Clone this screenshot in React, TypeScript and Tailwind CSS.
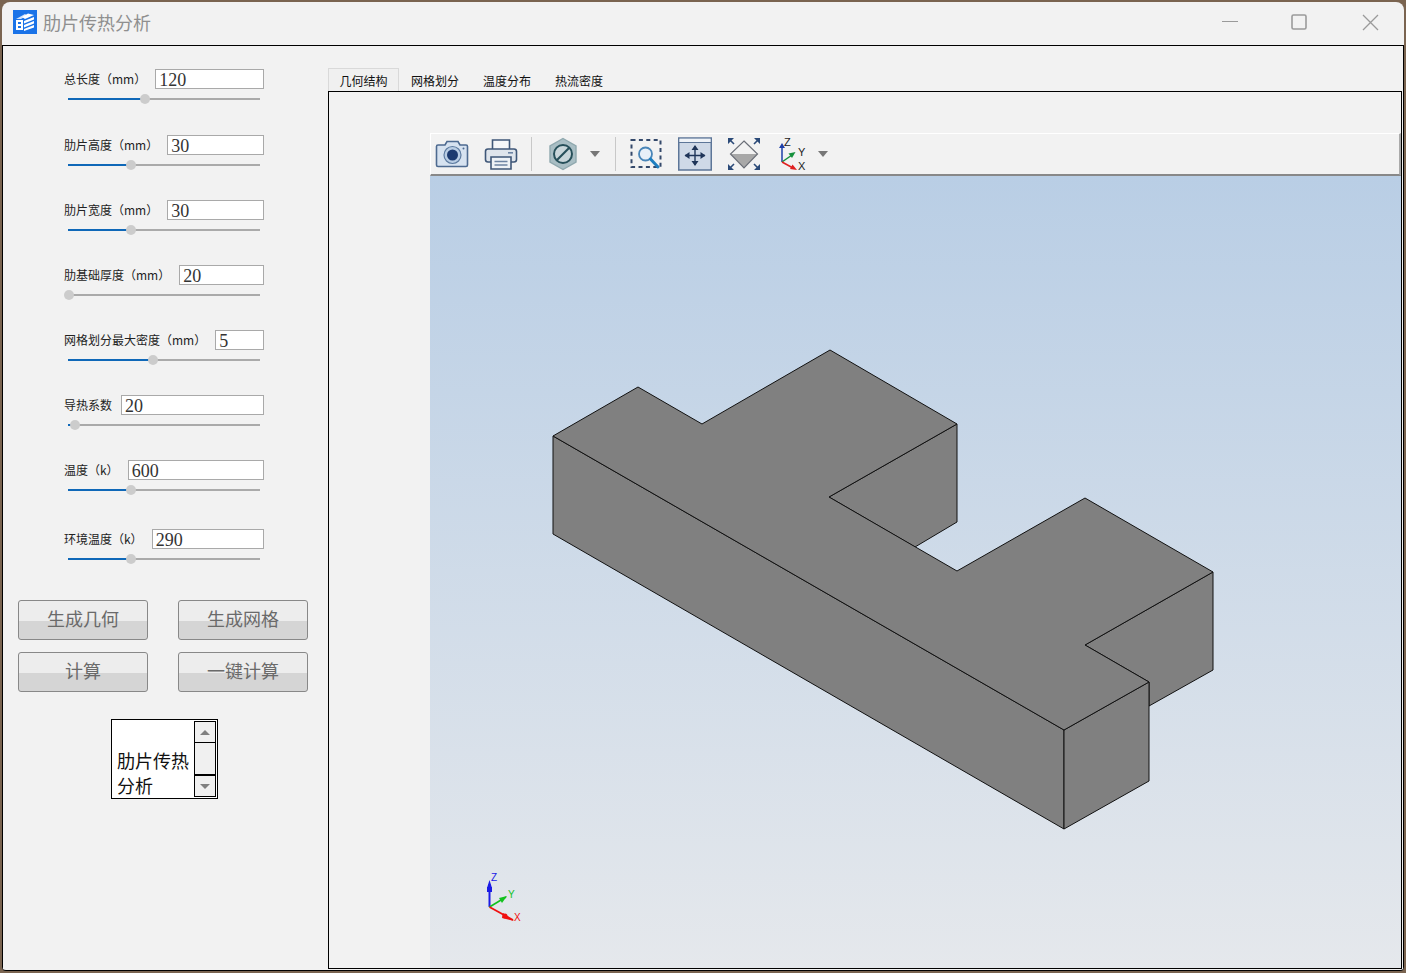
import React from "react";

const cjk = "font-['Noto_Sans_CJK_SC','Liberation_Sans',sans-serif]";

const params = [
  { label: "总长度（mm）", value: "120", thumb: 77, mb: "mb-[26px]" },
  { label: "肋片高度（mm）", value: "30", thumb: 63, mb: "mb-[25px]" },
  { label: "肋片宽度（mm）", value: "30", thumb: 63, mb: "mb-[25px]" },
  { label: "肋基础厚度（mm）", value: "20", thumb: 1, mb: "mb-[25px]" },
  { label: "网格划分最大密度（mm）", value: "5", thumb: 85, mb: "mb-[25px]" },
  { label: "导热系数", value: "20", thumb: 7, mb: "mb-[25px]" },
  { label: "温度（k）", value: "600", thumb: 63, mb: "mb-[29px]" },
  { label: "环境温度（k）", value: "290", thumb: 63, mb: "mb-0" },
];

const tabs = ["几何结构", "网格划分", "温度分布", "热流密度"];
const actions = ["生成几何", "生成网格", "计算", "一键计算"];

function AppIcon() {
  return (
    <svg width="24" height="24" viewBox="0 0 24 24">
      <rect width="24" height="24" fill="#1a73e8" />
      <path d="M3 9 L12 4 L14 5.5 L8 9 Z" fill="#cfe2fb" />
      <path d="M9 7 L15 3.5 L21 5 L12 9 Z" fill="#ffffff" />
      <path d="M3 10 H10 V20 H3 Z" fill="#ffffff" />
      <rect x="5" y="12" width="3" height="2" fill="#1a73e8" />
      <rect x="5" y="16" width="3" height="2" fill="#1a73e8" />
      <path d="M11 11 L21 7 V9.5 L11 13.5 Z M11 15 L21 11 V13.5 L11 17.5 Z M11 19 L21 15 V17.5 L11 21 Z" fill="#ffffff" />
    </svg>
  );
}

function ToolArrow() {
  return <div className="w-0 h-0 border-x-[5px] border-x-transparent border-t-[6px] border-t-[#777]" />;
}

function ToolSep() {
  return <div className="w-px h-[34px] bg-[#c8c8c8]" />;
}

function CameraIcon() {
  return (
    <svg width="34" height="30" viewBox="0 0 34 30">
      <path d="M1.5 7.5 Q1.5 6 3 6 H10 L12 2.5 H23 L25 6 H31 Q32.5 6 32.5 7.5 V26 Q32.5 27.5 31 27.5 H3 Q1.5 27.5 1.5 26 Z" fill="#d6e2f0" stroke="#4d6a90" strokeWidth="1.6" />
      <circle cx="17.5" cy="16" r="8.5" fill="#b9cde4" stroke="#5d7ba0" strokeWidth="1.2" />
      <circle cx="17.5" cy="16" r="5.5" fill="#1c3a70" />
      <circle cx="28.5" cy="9.5" r="1" fill="#4d6a90" />
    </svg>
  );
}

function PrinterIcon() {
  return (
    <svg width="34" height="34" viewBox="0 0 34 34">
      <path d="M8.5 13 V3 H25.5 V13" fill="#f4f6f8" stroke="#3f5778" strokeWidth="1.6" />
      <rect x="1.5" y="12" width="31" height="13" rx="2.5" fill="#dfe5ec" stroke="#3f5778" strokeWidth="1.6" />
      <rect x="24" y="15" width="5" height="1.6" fill="#6d84a3" />
      <path d="M7 20 H27 V32 H7 Z" fill="#eef2f6" stroke="#3f5778" strokeWidth="1.6" />
      <path d="M10.5 24.5 H23.5 M10.5 28 H23.5" stroke="#6d84a3" strokeWidth="1.3" />
    </svg>
  );
}

function HexIcon() {
  return (
    <svg width="30" height="34" viewBox="0 0 30 34">
      <path d="M15 1.5 L28 9 V25 L15 32.5 L2 25 V9 Z" fill="#a9bec4" stroke="#8fa8ae" strokeWidth="1.4" />
      <circle cx="15" cy="17" r="9" fill="#c9d6da" stroke="#27505a" strokeWidth="2" />
      <path d="M9 23 L21 11" stroke="#27505a" strokeWidth="2.2" />
    </svg>
  );
}

function ZoomBoxIcon() {
  return (
    <svg width="34" height="34" viewBox="0 0 34 34">
      <rect x="1.5" y="3" width="29" height="27" fill="none" stroke="#34496b" strokeWidth="2" strokeDasharray="4 3.4" />
      <circle cx="15.5" cy="17" r="6.5" fill="#e8f0f8" stroke="#4a86b8" strokeWidth="1.8" />
      <path d="M20.5 22 L28 30" stroke="#1e7fc0" strokeWidth="3" strokeLinecap="round" />
    </svg>
  );
}

function FitIcon() {
  return (
    <svg width="34" height="34" viewBox="0 0 34 34">
      <rect x="0.75" y="1" width="32.5" height="32" fill="#cfd9e7" stroke="#5d7698" strokeWidth="1.5" />
      <rect x="1.5" y="1.75" width="31" height="3.5" fill="#eef2f7" />
      <path d="M0.75 5.5 H33.25" stroke="#5d7698" strokeWidth="1" />
      <path d="M17 9 V28 M7 18.5 H27" stroke="#1f3558" strokeWidth="1.4" />
      <path d="M17 8 L13.5 13 H20.5 Z M17 29 L13.5 24 H20.5 Z M6.5 18.5 L11.5 15 V22 Z M27.5 18.5 L22.5 15 V22 Z" fill="#1f3558" />
    </svg>
  );
}

function IsoIcon() {
  return (
    <svg width="34" height="34" viewBox="0 0 34 34">
      <path d="M17 4 L30.5 17 H3.5 Z" fill="#f2f2f2" />
      <path d="M17 31 L30.5 17 H3.5 Z" fill="#a8a8a8" />
      <path d="M17 4 L30.5 17 L17 31 L3.5 17 Z" fill="none" stroke="#6b6f78" strokeWidth="1.2" />
      <path d="M1 1 H7 L1 7 Z M33 1 H27 L33 7 Z M1 33 H7 L1 27 Z M33 33 H27 L33 27 Z" fill="#2b4a78" />
      <path d="M3 3 L7 7 M31 3 L27 7 M3 31 L7 27 M31 31 L27 27" stroke="#2b4a78" strokeWidth="1.6" />
    </svg>
  );
}

function AxesIcon() {
  return (
    <svg width="28" height="34" viewBox="0 0 28 34">
      <path d="M4 25 V9" stroke="#1d3fa8" strokeWidth="1.5" />
      <path d="M4 6 L1 11 H7 Z" fill="#1d3fa8" />
      <path d="M4 25 L14 18" stroke="#15913c" strokeWidth="1.5" />
      <path d="M17.5 15 L10.5 16.5 L14 21 Z" fill="#15913c" />
      <path d="M4 25 L15 31" stroke="#e02020" strokeWidth="1.5" />
      <path d="M19 33 L14.5 27.5 L12 32 Z" fill="#e02020" />
      <text x="6" y="9" fontSize="11" fill="#222" fontFamily="Liberation Sans">Z</text>
      <text x="20" y="19" fontSize="11" fill="#222" fontFamily="Liberation Sans">Y</text>
      <text x="20" y="33" fontSize="11" fill="#222" fontFamily="Liberation Sans">X</text>
    </svg>
  );
}

function Part() {
  const stroke = { stroke: "#111", strokeWidth: 1, strokeLinejoin: "round" as const };
  return (
    <svg className="absolute inset-0" width="971" height="792" viewBox="430 176 971 792">
      <polygon points="829,497 957,424 957,522 915,547" fill="#808080" {...stroke} />
      <polygon points="1085,645 1213,572 1213,670 1149,706 1149,682" fill="#808080" {...stroke} />
      <polygon points="553,436 1064,730 1064,829 553,534" fill="#808080" {...stroke} />
      <polygon points="1064,730 1149,682 1149,781 1064,829" fill="#808080" {...stroke} />
      <polygon
        points="553,436 638,387 702,424 830,350 957,424 829,497 957,571 1085,498 1213,572 1085,645 1149,682 1064,730"
        fill="#808080"
        {...stroke}
      />
      {/* little triad, bottom left */}
      <path d="M489.5 907 V884" stroke="#1a1ae6" strokeWidth="2" />
      <path d="M489.5 880 L487 888 H492 Z" fill="#1a1ae6" />
      <rect x="487" y="887" width="5" height="5" fill="#1a1ae6" />
      <path d="M489.5 907 L506 897" stroke="#12c21e" strokeWidth="1.6" />
      <path d="M507 896 L499 898 L502 903 Z" fill="#12c21e" />
      <path d="M489.5 907 L513 920" stroke="#f01010" strokeWidth="1.8" />
      <path d="M514 921 L503 913 L502 918 Z" fill="#f01010" />
      <circle cx="505" cy="916" r="2.5" fill="#f01010" />
      <text x="491" y="881" fontSize="10" fill="#1a1ae6" fontFamily="Liberation Sans">Z</text>
      <text x="508" y="898" fontSize="10" fill="#12c21e" fontFamily="Liberation Sans">Y</text>
      <text x="514" y="921" fontSize="10" fill="#f01010" fontFamily="Liberation Sans">X</text>
    </svg>
  );
}

export default function App() {
  return (
    <div className={`w-[1406px] h-[973px] overflow-hidden bg-[#7a6450] pl-[2px] pt-[2px] ${cjk}`}>
      <div className="w-[1402px] h-[969px] rounded-t-[8px] rounded-b-[4px] bg-[#f2f2f2] flex flex-col overflow-hidden border-b border-black">
        {/* title bar */}
        <div className="h-[44px] shrink-0 flex items-center border-b border-black pl-[11px] pr-[25px] pb-[3px]">
          <AppIcon />
          <span className="ml-[6px] text-[18px] leading-none text-[#8f8f8f]">肋片传热分析</span>
          <div className="ml-auto flex items-center">
            <svg width="16" height="16" viewBox="0 0 16 16">
              <path d="M0 7.5 H16" stroke="#9a9a9a" strokeWidth="1" />
            </svg>
            <svg className="ml-[53px]" width="16" height="16" viewBox="0 0 16 16">
              <rect x="1" y="1" width="14" height="14" rx="1.5" fill="none" stroke="#9a9a9a" strokeWidth="1.6" />
            </svg>
            <svg className="ml-[55px]" width="17" height="17" viewBox="0 0 17 17">
              <path d="M1 1 L16 16 M16 1 L1 16" stroke="#9a9a9a" strokeWidth="1.3" />
            </svg>
          </div>
        </div>

        <div className="flex-1 flex min-h-0 border-x border-black">
          {/* parameter panel */}
          <div className="w-[325px] shrink-0 flex flex-col">
            <div className="pl-[61px] pt-[23px] w-[261px]">
              {params.map((p) => (
                <div key={p.label} className={p.mb}>
                  <div className="flex items-center h-[20px]">
                    <span className="text-[12px] leading-none whitespace-nowrap text-[#222]">{p.label}</span>
                    <input
                      readOnly
                      value={p.value}
                      className="ml-[9px] flex-1 min-w-0 h-[20px] border border-[#a9a9a9] bg-white pl-[3px] pt-[2px] text-[18px] leading-none text-[#333] font-['Liberation_Serif',serif] outline-none"
                    />
                  </div>
                  <div className="relative h-[20px] ml-[4px] w-[192px] flex items-center">
                    <div className="h-[2px] w-full bg-[#aaaaaa]" />
                    <div className="absolute left-0 top-[9px] h-[2px] bg-[#0f68b8]" style={{ width: p.thumb }} />
                    <div
                      className="absolute top-[5px] w-[10px] h-[10px] rounded-full bg-[#cccccc]"
                      style={{ left: p.thumb - 5 }}
                    />
                  </div>
                </div>
              ))}
            </div>

            <div className="mt-[31px] ml-[15px] grid grid-cols-[130px_130px] gap-x-[30px] gap-y-[12px]">
              {actions.map((a) => (
                <button
                  key={a}
                  className="h-[40px] pb-[4px] rounded-[3px] border border-[#888] bg-[linear-gradient(#ededed_0_20px,#d5d5d5_20px)] text-[18px] leading-none text-[#6a6a6a]"
                >
                  {a}
                </button>
              ))}
            </div>

            <div className="mt-[27px] ml-[108px] w-[107px] h-[80px] border border-black bg-white flex">
              <div className="flex-1 flex flex-col justify-end pl-[5px] text-[18px] leading-[25px] text-[#111]">
                肋片传热分析
              </div>
              <div className="w-[22px] mr-px my-px flex flex-col bg-[#f0f0f0] border border-black">
                <div className="h-[21px] flex items-center justify-center border-b border-black">
                  <div className="w-0 h-0 border-x-[5px] border-x-transparent border-b-[5px] border-b-[#808080]" />
                </div>
                <div className="flex-1" />
                <div className="h-[22px] flex items-center justify-center border-t-2 border-black">
                  <div className="w-0 h-0 border-x-[5px] border-x-transparent border-t-[5px] border-t-[#808080]" />
                </div>
              </div>
            </div>
          </div>

          {/* tabs and 3d view */}
          <div className="flex-1 min-w-0 flex flex-col">
            <div className="h-[45px] shrink-0 flex items-end">
              {tabs.map((t, i) => (
                <div
                  key={t}
                  className={
                    i === 0
                      ? "h-[23px] w-[71px] pt-px flex items-center justify-center border border-b-0 border-[#d9d9d9] bg-[#f0f0f0] text-[12px] leading-none text-[#111]"
                      : "h-[23px] w-[72px] pt-[2px] flex items-center justify-center text-[12px] leading-none text-[#111]"
                  }
                >
                  {t}
                </div>
              ))}
            </div>
            <div className="flex-1 min-h-0 border border-black mr-px mb-px pt-[41px] pl-[101px] flex flex-col">
              <div className="h-[43px] shrink-0 flex items-center border-t border-l border-white border-b-[#888] border-r-[#aaa] border-r-2 border-b-2 pl-[4px]">
                <CameraIcon />
                <div className="ml-[15px]"><PrinterIcon /></div>
                <div className="ml-[13px]"><ToolSep /></div>
                <div className="ml-[16px]"><HexIcon /></div>
                <div className="ml-[12px]"><ToolArrow /></div>
                <div className="ml-[15px]"><ToolSep /></div>
                <div className="ml-[14px]"><ZoomBoxIcon /></div>
                <div className="ml-[14px]"><FitIcon /></div>
                <div className="ml-[15px]"><IsoIcon /></div>
                <div className="ml-[17px]"><AxesIcon /></div>
                <div className="ml-[12px]"><ToolArrow /></div>
              </div>
              <div className="relative flex-1 min-h-0 bg-[linear-gradient(#b9cee5,#e5e8ec)]">
                <Part />
              </div>
            </div>
          </div>
        </div>
      </div>
    </div>
  );
}
